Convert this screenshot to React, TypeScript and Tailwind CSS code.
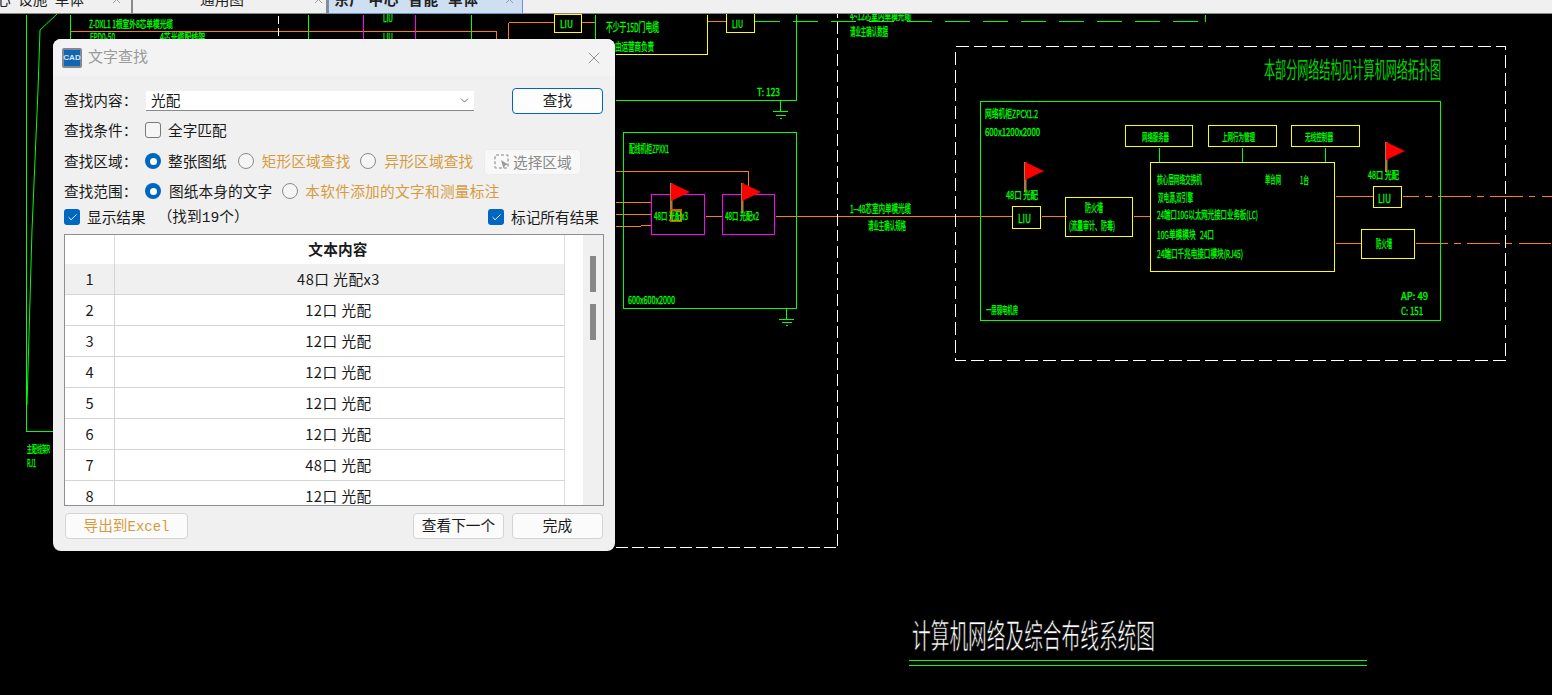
import type { ReactNode } from "react";
import { ChevronDown, Check, X } from "lucide-react";

const GREEN = "#00ff00";
const YELLOW = "#ffff00";
const ORANGE = "#ff7f00";
const MAGENTA = "#ff00ff";
const WHITE = "#ffffff";

// x1 y1 x2 y2 colour
const lines: [number, number, number, number, string][] = [
  [26, 14, 26, 431, GREEN],
  [26, 431, 53, 431, GREEN],
  [70, 14, 70, 39, GREEN],
  [70, 31, 415, 31, ORANGE],
  [308, 14, 308, 39, GREEN],
  [363, 14, 363, 39, MAGENTA],
  [415, 14, 415, 39, MAGENTA],
  [471, 14, 471, 39, GREEN],
  [415, 31, 496, 31, ORANGE],
  [496, 31, 496, 39, ORANGE],
  [508, 22, 508, 39, ORANGE],
  [508, 22, 554, 22, ORANGE],
  [581, 22, 595, 22, ORANGE],
  [595, 14, 595, 39, GREEN],
  [707, 14, 707, 54, YELLOW],
  [615, 54, 707, 54, YELLOW],
  [707, 21, 726, 21, ORANGE],
  [796, 14, 796, 100, GREEN],
  [615, 100, 796, 100, GREEN],
  [780, 100, 780, 111, GREEN],
  [772, 111, 787, 111, GREEN],
  [775, 115, 785, 115, GREEN],
  [779, 118, 781, 118, GREEN],
  [786, 308, 786, 319, GREEN],
  [778, 319, 793, 319, GREEN],
  [781, 322, 791, 322, GREEN],
  [785, 325, 787, 325, GREEN],
  [615, 171, 748, 171, ORANGE],
  [748, 171, 748, 194, ORANGE],
  [615, 202, 651, 202, ORANGE],
  [615, 214, 651, 214, ORANGE],
  [615, 226, 640, 226, ORANGE],
  [640, 225, 651, 225, ORANGE],
  [705, 216, 722, 216, ORANGE],
  [775, 216, 1012, 216, ORANGE],
  [1041, 216, 1066, 216, ORANGE],
  [1133, 216, 1150, 216, ORANGE],
  [1335, 196, 1373, 196, ORANGE],
  [1335, 243, 1361, 243, ORANGE],
  [1159, 147, 1159, 162, GREEN],
  [1242, 147, 1242, 162, GREEN],
  [1325, 147, 1325, 162, GREEN],
  [1205, 14, 1205, 21, GREEN],
  [908, 660, 1366, 660, GREEN],
  [908, 665, 1366, 665, GREEN],
  // dashes of the two leaving cables
  [1402, 196, 1418, 196, ORANGE],
  [1424, 196, 1431, 196, ORANGE],
  [1437, 196, 1470, 196, ORANGE],
  [1476, 196, 1483, 196, ORANGE],
  [1489, 196, 1522, 196, ORANGE],
  [1528, 196, 1534, 196, ORANGE],
  [1541, 196, 1552, 196, ORANGE],
  [1415, 243, 1447, 243, ORANGE],
  [1453, 243, 1460, 243, ORANGE],
  [1466, 243, 1499, 243, ORANGE],
  [1505, 243, 1511, 243, ORANGE],
  [1518, 243, 1550, 243, ORANGE],
];

// x y w h colour
const boxes: [number, number, number, number, string][] = [
  [554, 14, 27, 18, YELLOW],
  [726, 10, 28, 22, YELLOW],
  [623, 132, 173, 176, GREEN],
  [651, 194, 53, 40, MAGENTA],
  [722, 194, 52, 40, MAGENTA],
  [980, 101, 460, 219, GREEN],
  [1012, 206, 28, 22, YELLOW],
  [1065, 197, 67, 39, YELLOW],
  [1150, 162, 184, 109, YELLOW],
  [1125, 125, 67, 21, YELLOW],
  [1208, 125, 68, 21, YELLOW],
  [1291, 125, 68, 21, YELLOW],
  [1373, 186, 28, 21, YELLOW],
  [1361, 229, 53, 29, YELLOW],
];

// x y(centre) width fontsize text
const labels: [number, number, number, number, string][] = [
  [89, 24, 84, 10, "Z-DXL1 1根室外8芯单模光缆"],
  [90, 37, 25, 10, "FPD0-50"],
  [160, 37, 45, 10, "4芯光缆配线架"],
  [383, 18, 10, 10, "LIU"],
  [383, 37, 10, 10, "LIU"],
  [560, 24, 13, 11, "LIU"],
  [732, 24, 11, 11, "LIU"],
  [606, 27, 53, 12, "不少于15D门电缆"],
  [615, 47, 39, 11, "由运营商负责"],
  [850, 16, 61, 10, "4~12芯室内单模光缆"],
  [850, 32, 38, 11, "请业主确认数据"],
  [757, 92, 23, 10, "T:  123"],
  [629, 149, 40, 11, "配线机柜ZPXX1"],
  [628, 300, 47, 10, "600x600x2000"],
  [654, 216, 34, 10, "48口 光配x3"],
  [725, 216, 34, 10, "48口 光配x2"],
  [850, 209, 61, 11, "1--48芯室内单模光缆"],
  [868, 226, 38, 11, "请业主确认规格"],
  [985, 114, 53, 11, "网络机柜ZPCX1.2"],
  [985, 132, 55, 10, "600x1200x2000"],
  [986, 310, 32, 10, "一层弱电机房"],
  [1142, 137, 27, 10, "网络服务器"],
  [1222, 137, 33, 10, "上网行为管理"],
  [1305, 137, 28, 10, "无线控制器"],
  [1157, 180, 45, 11, "核心层网络交换机"],
  [1265, 180, 16, 11, "单台网"],
  [1300, 180, 9, 10, "1台"],
  [1158, 198, 35, 11, "双电源,双引擎"],
  [1157, 215, 101, 11, "24端口10G以太网光接口业务板(LC)"],
  [1157, 235, 57, 11, "10G单模模块\u00a0\u00a0\u00a024口"],
  [1157, 254, 86, 11, "24端口千兆电接口模块(RJ45)"],
  [1401, 296, 27, 10, "AP:  49"],
  [1401, 311, 22, 10, "C:  151"],
  [1085, 208, 18, 11, "防火墙"],
  [1069, 226, 46, 11, "(流量审计、防毒)"],
  [1006, 195, 32, 10, "48口 光配"],
  [1368, 175, 31, 10, "48口 光配"],
  [1018, 218, 13, 12, "LIU"],
  [1378, 198, 13, 12, "LIU"],
  [1376, 244, 16, 11, "防火墙"],
  [27, 449, 23, 10, "主配线架R"],
  [27, 463, 9, 10, "RJ1"],
];

const flags: [number, number, number][] = [
  [670, 183, 221],
  [741, 183, 213],
  [1024, 162, 192],
  [1385, 142, 172],
];

const rows = ["48口 光配x3", "12口 光配", "12口 光配", "12口 光配", "12口 光配", "12口 光配", "48口 光配", "12口 光配"];

function Drawing() {
  return (
    <svg width={1552} height={681} viewBox="0 14 1552 681" className="block" fontFamily="'Noto Sans CJK SC', sans-serif">
      <g shapeRendering="crispEdges" fill="none">
        {lines.map(([x1, y1, x2, y2, c], i) => (
          <line key={i} x1={x1 + 0.5} y1={y1 + 0.5} x2={x2 + 0.5} y2={y2 + 0.5} stroke={c} />
        ))}
        {boxes.map(([x, y, w, h, c], i) => (
          <path key={i} d={`M${x + 0.5} ${y + 0.5}h${w}v${h}h${-w}z`} stroke={c} />
        ))}
        <line x1="755" y1="21.5" x2="1205" y2="21.5" stroke={GREEN} strokeDasharray="25 13" />
        <line x1="278.5" y1="16" x2="278.5" y2="36" stroke={WHITE} strokeDasharray="8 4" />
        <path d="M615.5 547.5H837.5V14" stroke={WHITE} strokeDasharray="12 4" />
        <rect x="955.5" y="46.5" width="550" height="314" stroke={WHITE} strokeDasharray="13 5" />
      </g>
      <path d="M57 14L40 30L38 90L32 230L27 405" stroke={GREEN} fill="none" />
      {flags.map(([x, top, bottom], i) => (
        <g key={i}>
          <rect x={x} y={top} width={2.5} height={bottom - top} fill="#a87a44" />
          <polygon points={`${x + 1},${top} ${x + 20},${top + 9} ${x + 1},${top + 18}`} fill="#ff0000" />
        </g>
      ))}
      <rect x="671" y="210" width="10" height="11" fill="none" stroke="#e65100" strokeWidth="2" shapeRendering="crispEdges" />
      <g fill={GREEN} stroke={GREEN} strokeWidth={0.3}>
        {labels.map(([x, y, w, s, t], i) => (
          <text key={i} x={x} y={y + s * 0.38} fontSize={s} textLength={w} lengthAdjust="spacingAndGlyphs">
            {t}
          </text>
        ))}
      </g>
      <text x={1264} y={78} fontSize={23} fill={GREEN} stroke="#000" strokeWidth={0.3} textLength={177} lengthAdjust="spacingAndGlyphs">
        本部分网络结构见计算机网络拓扑图
      </text>
      <text x={912} y={648} fontSize={33} fill={WHITE} stroke="#000" strokeWidth={0.6} textLength={243} lengthAdjust="spacingAndGlyphs">
        计算机网络及综合布线系统图
      </text>
    </svg>
  );
}

function Tabs() {
  return (
    <div className="flex h-[14px] overflow-hidden bg-[#f0f0f0] text-[14.67px] text-[#222]">
      <Tab className="w-[133px] justify-end border-r-2 border-b border-[#8a8a8a] pr-[8px]" close="ml-[26px]" title="心' 设施' 单体" />
      <Tab className="w-[195px] border-r-2 border-b border-[#8a8a8a] pl-[67px]" close="ml-[68px]" title="通用图" />
      <Tab className="w-[195px] border border-t-0 border-[#6f93c0] bg-[#cfdff2] pl-[5px] font-bold tracking-[0.6px]" close="ml-[24px]" title="东厂 中心' 智能' 单体" />
      <div className="flex-1 border-b border-[#8a8a8a]" />
    </div>
  );
}

function Tab({ className, close, title }: { className: string; close: string; title: string }) {
  return (
    <div className={`flex h-[14px] shrink-0 items-start overflow-hidden ${className}`}>
      <span className="-mt-[11px] whitespace-nowrap leading-5">{title}</span>
      <X size={13} strokeWidth={1.5} className={`-mt-[7px] shrink-0 text-[#888] ${close}`} />
    </div>
  );
}

function Radio({ on }: { on?: boolean }) {
  return (
    <span className={`flex h-4 w-4 shrink-0 items-center justify-center rounded-full ${on ? "bg-[#0067c0]" : "border border-[#8a8a8a] bg-[#f5f5f5]"}`}>
      {on && <span className="h-[7px] w-[7px] rounded-full bg-white" />}
    </span>
  );
}

function Tick() {
  return (
    <span className="flex h-4 w-4 shrink-0 items-center justify-center rounded-[3px] bg-[#0067c0]">
      <Check size={11} strokeWidth={2} className="text-white" />
    </span>
  );
}

function Label({ children }: { children: ReactNode }) {
  return <span className="-ml-px w-[81px] shrink-0">{children}</span>;
}

function FindDialog() {
  return (
    <div className="absolute left-[53px] top-[39px] h-[512px] w-[562px] overflow-hidden rounded-lg bg-[#f0f0f0] font-['Noto_Sans_CJK_SC',sans-serif] text-[14.67px] text-[#1a1a1a]">
      <div className="flex h-[37px] items-center bg-[#f3f3f3] pl-[9px] pr-[11px]">
        <span className="flex h-5 w-5 items-center justify-center rounded-[2px] border-2 border-[#808890] bg-[#1464b4] font-['Liberation_Sans',sans-serif] text-[8px] font-bold text-[#dbe9f7]">
          CAD
        </span>
        <span className="ml-[6px] pb-[2px] text-[15px] text-[#9a9a9a]">文字查找</span>
        <X size={20} strokeWidth={1.1} className="ml-auto text-[#8a8a8a]" />
      </div>

      <div className="flex flex-col pl-[12px] pr-[11px]">
        <div className="mt-[12px] flex h-[26px] items-center">
          <span className="-ml-px w-[82px] shrink-0 pb-[2px]">查找内容：</span>
          <div className="flex h-[20px] w-[328px] items-center justify-between border-b border-[#8a8a8a] bg-white pl-[5px] pr-[3px]">
            <span className="pb-[2px]">光配</span>
            <ChevronDown size={13} strokeWidth={1.5} className="text-[#555]" />
          </div>
          <button className="ml-[38px] h-[26px] w-[91px] rounded-[4px] border border-[#0067c0] bg-[#fdfdfd] pb-[2px]">查找</button>
        </div>

        <div className="mt-[4px] flex h-[24px] items-center">
          <Label>查找条件：</Label>
          <span className="h-4 w-4 shrink-0 rounded-[3px] border border-[#7a7a7a] bg-[#f5f5f5]" />
          <span className="ml-[7px]">全字匹配</span>
        </div>

        <div className="mt-[6px] flex h-[26px] items-center whitespace-nowrap">
          <Label>查找区域：</Label>
          <Radio on />
          <span className="ml-[7px]">整张图纸</span>
          <span className="ml-[11px]"><Radio /></span>
          <span className="ml-[8px] tracking-[0.15px] text-[#d79b3f]">矩形区域查找</span>
          <span className="ml-[10px]"><Radio /></span>
          <span className="ml-[8px] tracking-[0.15px] text-[#d79b3f]">异形区域查找</span>
          <button className="ml-[11px] mt-[2px] flex h-[26px] w-[97px] shrink-0 items-center justify-center gap-[3px] rounded-[4px] border border-[#ececec] bg-[#f8f8f8] text-[#8a8a8a]">
            <svg width="16" height="16" viewBox="0 0 16 16" fill="none">
              <rect x="1" y="1" width="13" height="13" rx="1" stroke="#aaa" strokeWidth="1.6" strokeDasharray="3 2" />
              <path d="M7 6l7 4.5-3 1-1.5 3z" fill="#999" />
            </svg>
            选择区域
          </button>
        </div>

        <div className="mt-[5px] flex h-[24px] items-center whitespace-nowrap">
          <Label>查找范围：</Label>
          <Radio on />
          <span className="ml-[8px] tracking-[0.1px]">图纸本身的文字</span>
          <span className="ml-[10px]"><Radio /></span>
          <span className="ml-[7px] tracking-[0.3px] text-[#d79b3f]">本软件添加的文字和测量标注</span>
        </div>

        <div className="mt-[2px] -ml-px flex h-[24px] items-center justify-between whitespace-nowrap pr-[5px]">
          <div className="flex items-center">
            <Tick />
            <span className="ml-[7px]">显示结果</span>
            <span className="ml-[12px]">（找到<span className="font-['Liberation_Mono',monospace]">19</span>个）</span>
          </div>
          <div className="flex items-center">
            <Tick />
            <span className="ml-[7px]">标记所有结果</span>
          </div>
        </div>

        <div className="mt-[5px] -ml-px flex h-[272px] overflow-hidden border border-[#8a8f96] bg-white">
          <div className="w-[518px] shrink-0">
            <div className="grid h-[29px] grid-cols-[50px_449px_19px] items-center">
              <span className="h-full border-r border-[#dcdcdc]" />
              <span className="pb-[2px] pr-[3px] text-center font-bold tracking-[0.2px]">文本内容</span>
              <span className="h-full border-l border-[#dcdcdc]" />
            </div>
            {rows.map((text, i) => (
              <div
                key={i}
                className={`grid h-[31px] grid-cols-[50px_449px_19px] items-center ${i === 0 ? "bg-[#f0f0f0]" : ""}`}
              >
                <span className="flex h-full items-center justify-center border-r border-b border-[#d4d4d4]">{i + 1}</span>
                <span className="flex h-full items-center justify-center border-b border-[#d4d4d4] pr-[2px] tracking-[0.5px]">{text}</span>
                <span className="h-full border-l border-[#dcdcdc] bg-white" />
              </div>
            ))}
          </div>
          <div className="flex w-[20px] shrink-0 flex-col items-center bg-[#f0f0f0] pt-[21px]">
            <span className="h-[36px] w-[6px] bg-[#888]" />
            <span className="mt-[12px] h-[36px] w-[6px] bg-[#888]" />
          </div>
        </div>

        <div className="mt-[7px] flex h-[26px] items-center pr-px">
          <button className="h-[26px] w-[123px] rounded-[4px] border border-[#d4d4d4] bg-[#fbfbfb] pb-[2px] text-[#d79b3f]">
            导出到<span className="font-['Liberation_Mono',monospace] text-[14px]">Excel</span>
          </button>
          <button className="ml-auto h-[26px] w-[91px] rounded-[4px] border border-[#d4d4d4] bg-[#fbfbfb] pb-[2px]">查看下一个</button>
          <button className="ml-[8px] h-[26px] w-[91px] rounded-[4px] border border-[#d4d4d4] bg-[#fbfbfb] pb-[2px]">完成</button>
        </div>
      </div>
    </div>
  );
}

export default function App() {
  return (
    <div className="relative h-[695px] w-[1552px] overflow-hidden bg-black font-['Noto_Sans_CJK_SC',sans-serif]">
      <Tabs />
      <Drawing />
      <FindDialog />
    </div>
  );
}
